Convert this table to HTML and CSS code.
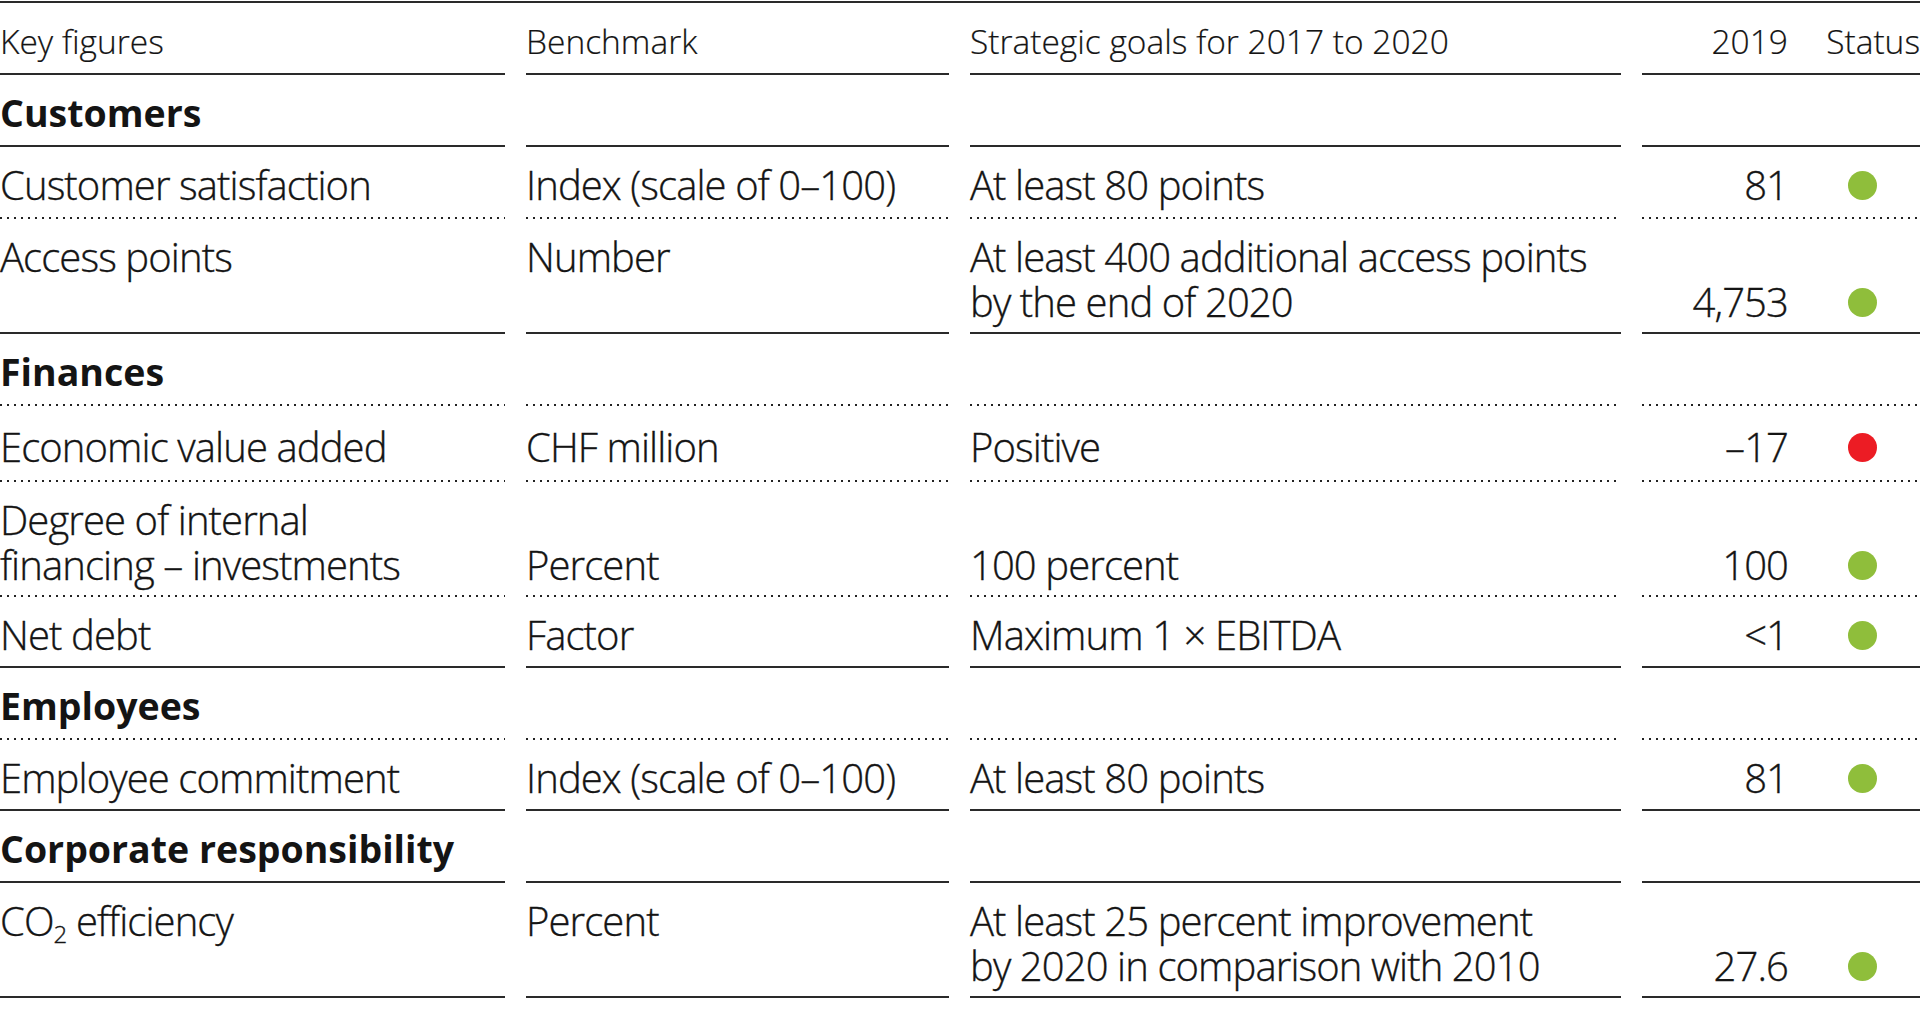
FILE: index.html
```html
<!DOCTYPE html>
<html lang="en">
<head>
<meta charset="utf-8">
<title>Key figures</title>
<link rel="stylesheet" href="styles.css">
</head>
<body>
<div class="table">
  <div class="rule-top"></div>

  <div class="row head solid">
    <div class="cell">Key figures</div>
    <div class="cell">Benchmark</div>
    <div class="cell">Strategic goals for 2017 to 2020</div>
    <div class="cell fig"><span class="val">2019</span><span class="stat stat-text">Status</span></div>
  </div>

  <div class="row section solid">
    <div class="cell">Customers</div>
    <div class="cell"></div>
    <div class="cell"></div>
    <div class="cell fig"></div>
  </div>

  <div class="row dotted">
    <div class="cell">Customer satisfaction</div>
    <div class="cell">Index (scale of 0–100)</div>
    <div class="cell">At least 80 points</div>
    <div class="cell fig"><span class="val">81</span><span class="stat"><i class="dot green"></i></span></div>
  </div>

  <div class="row solid double">
    <div class="cell">Access points</div>
    <div class="cell">Number</div>
    <div class="cell">At least 400 additional access points<br>by the end of 2020</div>
    <div class="cell fig"><span class="val">4,753</span><span class="stat"><i class="dot green"></i></span></div>
  </div>

  <div class="row section dotted">
    <div class="cell">Finances</div>
    <div class="cell"></div>
    <div class="cell"></div>
    <div class="cell fig"></div>
  </div>

  <div class="row dotted tall">
    <div class="cell">Economic value added</div>
    <div class="cell">CHF million</div>
    <div class="cell">Positive</div>
    <div class="cell fig"><span class="val">–17</span><span class="stat"><i class="dot red"></i></span></div>
  </div>

  <div class="row dotted double">
    <div class="cell">Degree of internal<br>financing – investments</div>
    <div class="cell bottom">Percent</div>
    <div class="cell bottom">100 percent</div>
    <div class="cell fig"><span class="val">100</span><span class="stat"><i class="dot green"></i></span></div>
  </div>

  <div class="row solid short">
    <div class="cell">Net debt</div>
    <div class="cell">Factor</div>
    <div class="cell">Maximum 1 × EBITDA</div>
    <div class="cell fig"><span class="val">&lt;1</span><span class="stat"><i class="dot green"></i></span></div>
  </div>

  <div class="row section dotted">
    <div class="cell">Employees</div>
    <div class="cell"></div>
    <div class="cell"></div>
    <div class="cell fig"></div>
  </div>

  <div class="row solid short">
    <div class="cell">Employee commitment</div>
    <div class="cell">Index (scale of 0–100)</div>
    <div class="cell">At least 80 points</div>
    <div class="cell fig"><span class="val">81</span><span class="stat"><i class="dot green"></i></span></div>
  </div>

  <div class="row section solid">
    <div class="cell">Corporate responsibility</div>
    <div class="cell"></div>
    <div class="cell"></div>
    <div class="cell fig"></div>
  </div>

  <div class="row solid double">
    <div class="cell">CO<sub>2</sub> efficiency</div>
    <div class="cell">Percent</div>
    <div class="cell">At least 25 percent improvement<br>by 2020 in comparison with 2010</div>
    <div class="cell fig"><span class="val">27.6</span><span class="stat"><i class="dot green"></i></span></div>
  </div>
</div>
</body>
</html>
```

FILE: styles.css
```css
* { box-sizing: border-box; }

html, body {
  margin: 0;
  padding: 0;
  background: #ffffff;
}

body {
  padding-top: 1px;
  font-family: "Open Sans", "Noto Sans", "Liberation Sans", sans-serif;
  color: #141414;
}

.table {
  width: 1920px;
}

.rule-top {
  height: 2px;
  background: #2a2a2a;
}

.row {
  display: grid;
  grid-template-columns: 505px 423px 651px 1fr;
  column-gap: 21px;
  font-size: 40px;
  font-weight: 300;
  letter-spacing: -0.9px;
  line-height: 45px;
  -webkit-text-stroke: 0.35px #141414;
}

.cell {
  padding: 15px 0 10px 0;
  white-space: nowrap;
}

.row.solid .cell {
  border-bottom: 2px solid #2a2a2a;
}

.row.dotted .cell {
  padding-bottom: 12px;
  background-image: linear-gradient(to right, #222 0 2px, transparent 2px 7px);
  background-size: 7px 2px;
  background-repeat: repeat-x;
  background-position: left bottom;
}

.row.short .cell {
  padding-bottom: 9px;
}

.row.double .cell {
  padding-bottom: 8px;
}

.row.dotted.double .cell {
  padding-bottom: 10px;
}

.row.tall .cell {
  padding-top: 18px;
  padding-bottom: 13px;
}

.row.head {
  font-size: 33.5px;
  letter-spacing: 0;
  -webkit-text-stroke: 0.2px #141414;
}

.row.head .cell {
  padding-top: 16px;
  padding-bottom: 9px;
}

.row.section {
  -webkit-text-stroke: 0;
}

.row.section .cell {
  font-weight: 700;
  font-size: 37.5px;
  letter-spacing: 0;
}

.cell.bottom {
  align-self: end;
}

.cell.fig {
  display: flex;
  align-items: flex-end;
}

.val {
  width: 146px;
  text-align: right;
}

.stat {
  flex: 1;
  display: flex;
  align-items: flex-end;
  height: 45px;
  padding-bottom: 7px;
}

.stat-text {
  justify-content: flex-end;
  align-items: baseline;
  padding-bottom: 0;
  height: auto;
}

.dot {
  display: block;
  width: 29px;
  height: 29px;
  border-radius: 50%;
  margin-left: 60px;
}

.dot.green { background: #8fbe3b; }
.dot.red { background: #ec1c24; }

sub {
  font-size: 0.6em;
  line-height: 0;
  vertical-align: -0.3em;
}
```
